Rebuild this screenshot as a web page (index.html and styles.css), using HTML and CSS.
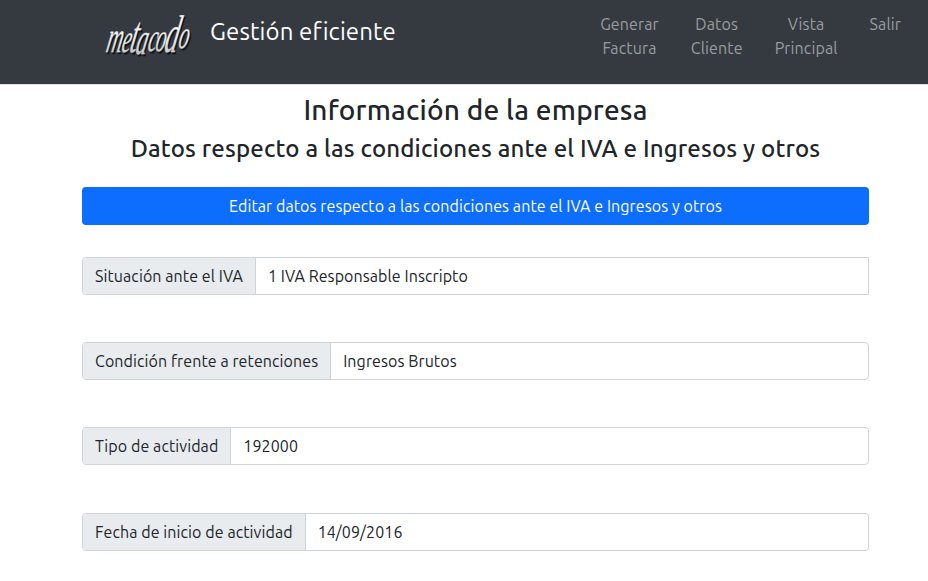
FILE: index.html
```
<!DOCTYPE html>
<html lang="es">
<head>
<meta charset="utf-8">
<title>Gestión eficiente</title>
<link rel="stylesheet" href="styles.css">
</head>
<body>
<header class="navbar">
  <a class="brand">
    <svg class="logo" width="90" height="48" viewBox="0 0 90 48" aria-label="metacodo">
      <defs>
        <linearGradient id="metal" x1="0" y1="0" x2="0" y2="1">
          <stop offset="0" stop-color="#ffffff"/>
          <stop offset=".6" stop-color="#ececea"/>
          <stop offset="1" stop-color="#a8a8a6"/>
        </linearGradient>
      </defs>
      <g class="logo-shadow" transform="translate(1.3 1.5)">
        <text transform="translate(0 40) skewX(-12) scale(.5 1)"><tspan font-size="44" x="0">m</tspan><tspan font-size="40" x="31">e</tspan><tspan font-size="52" x="47">t</tspan><tspan font-size="45" x="60" dy="2">a</tspan><tspan font-size="40" x="83" dy="-3">c</tspan><tspan font-size="40" x="98">o</tspan><tspan font-size="53" x="116" dy="1">d</tspan><tspan font-size="40" x="143" dy="-4">o</tspan></text>
      </g>
      <g class="logo-face">
        <text transform="translate(0 40) skewX(-12) scale(.5 1)"><tspan font-size="44" x="0">m</tspan><tspan font-size="40" x="31">e</tspan><tspan font-size="52" x="47">t</tspan><tspan font-size="45" x="60" dy="2">a</tspan><tspan font-size="40" x="83" dy="-3">c</tspan><tspan font-size="40" x="98">o</tspan><tspan font-size="53" x="116" dy="1">d</tspan><tspan font-size="40" x="143" dy="-4">o</tspan></text>
      </g>
    </svg>
    <span class="brand-name">Gestión eficiente</span>
  </a>
  <nav class="menu">
    <a>Generar<br>Factura</a>
    <a>Datos<br>Cliente</a>
    <a>Vista<br>Principal</a>
    <a>Salir</a>
  </nav>
</header>
<main class="container">
  <h3 class="title">Información de la empresa</h3>
  <h4 class="subtitle">Datos respecto a las condiciones ante el IVA e Ingresos y otros</h4>
  <button class="edit" type="button">Editar datos respecto a las condiciones ante el IVA e Ingresos y otros</button>
  <div class="fields">
    <div class="group square"><span class="label">Situación ante el IVA</span><span class="value">1 IVA Responsable Inscripto</span></div>
    <div class="group"><span class="label">Condición frente a retenciones</span><span class="value">Ingresos Brutos</span></div>
    <div class="group"><span class="label">Tipo de actividad</span><span class="value">192000</span></div>
    <div class="group"><span class="label">Fecha de inicio de actividad</span><span class="value">14/09/2016</span></div>
  </div>
</main>
</body>
</html>
```
FILE: styles.css
```
* { box-sizing: border-box; }
body {
  margin: 0;
  font: 16px/24px Ubuntu, "Open Sans", sans-serif;
  letter-spacing: .09px;
  color: #212529;
  background: #fff;
  overflow: hidden;
}
.navbar {
  display: flex;
  justify-content: space-between;
  height: 85px;
  padding: 12px 27px 0 105px;
  background: #343a40;
  border-bottom: 1px solid #dee2e6;
}
.brand { display: flex; color: #fff; }
.logo { overflow: visible; }
.logo text { font-family: "Liberation Serif", serif; font-style: italic; letter-spacing: 0; stroke-width: .3px; }
.logo-face { fill: url(#metal); stroke: #e4e4e2; }
.logo-shadow { fill: #0c0e10; stroke: #0c0e10; opacity: .85; }
.brand-name {
  margin-left: 15px;
  font-size: 24px;
  line-height: 40px;
  letter-spacing: .13px;
}
.menu { display: flex; gap: 32px; color: #9a9da0; text-align: center; letter-spacing: .13px; }
.container { width: 787px; margin: 0 0 0 82px; }
.title, .subtitle { margin: 0; font-weight: 500; text-align: center; white-space: nowrap; }
.title { padding-top: 8px; font-size: 28px; line-height: 34px; letter-spacing: .18px; }
.subtitle { margin-top: 7px; font-size: 24px; line-height: 29px; letter-spacing: .16px; }
.edit {
  display: block;
  width: 100%;
  height: 38px;
  margin-top: 24px;
  padding: 0;
  border: 0;
  border-radius: 4px;
  background: #0d6efd;
  color: #fff;
  font: inherit;
  letter-spacing: .09px;
}
.fields { display: grid; gap: 47.2px; margin-top: 32px; }
.group {
  display: flex;
  height: 38px;
  border: 1px solid #ced4da;
  border-radius: 4px;
  line-height: 36px;
  white-space: nowrap;
}
.square { border-radius: 4px 0 0 4px; }
.label {
  padding: 0 12px;
  border-right: 1px solid #ced4da;
  border-radius: 3px 0 0 3px;
  background: #e9ecef;
}
.value { flex: 1; padding-left: 12px; }
```
